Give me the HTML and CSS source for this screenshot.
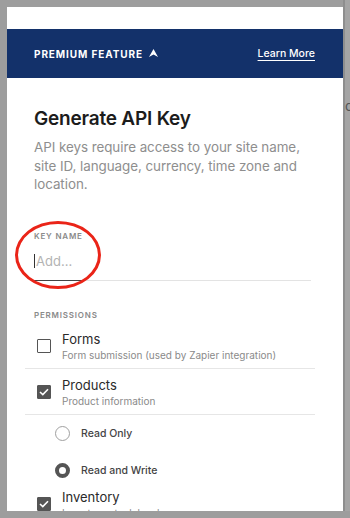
FILE: index.html
```html
<!DOCTYPE html>
<html>
<head>
<meta charset="utf-8">
<link rel="stylesheet" href="styles.css">
</head>
<body>
<div class="stage">
  <div class="modal">
    <div class="modal-top"></div>
    <div class="banner">
      <div class="banner-label">PREMIUM FEATURE
        <svg class="banner-icon" width="9" height="8" viewBox="0 0 9 8"><path d="M4.5 0 L9 8 L4.5 5.6 L0 8 Z" fill="#fff"/></svg>
      </div>
      <a class="banner-link">Learn More</a>
    </div>
    <div class="content">
      <h1 class="title">Generate API Key</h1>
      <p class="desc">API keys require access to your site name, site ID, language, currency, time zone and location.</p>

      <div class="field">
        <div class="field-label">KEY NAME</div>
        <div class="field-input"><span class="caret"></span><span class="placeholder">Add...</span></div>
        <div class="field-line"><span class="field-line-active"></span></div>
        <div class="annotation"></div>
      </div>

      <div class="section-label">PERMISSIONS</div>
      <div class="perm perm-first">
        <span class="checkbox"></span>
        <div class="perm-text">
          <div class="perm-title">Forms</div>
          <div class="perm-sub">Form submission (used by Zapier integration)</div>
        </div>
      </div>
      <div class="perm">
        <span class="checkbox checked"><svg width="10" height="8" viewBox="0 0 10 8"><path d="M1 4 L3.8 6.6 L9 1.2" fill="none" stroke="#fff" stroke-width="1.6"/></svg></span>
        <div class="perm-text">
          <div class="perm-title">Products</div>
          <div class="perm-sub">Product information</div>
        </div>
      </div>
      <div class="radios">
        <div class="radio-row"><span class="radio"></span><span class="radio-label">Read Only</span></div>
        <div class="radio-row"><span class="radio selected"></span><span class="radio-label">Read and Write</span></div>
      </div>
      <div class="perm perm-last">
        <span class="checkbox checked"><svg width="10" height="8" viewBox="0 0 10 8"><path d="M1 4 L3.8 6.6 L9 1.2" fill="none" stroke="#fff" stroke-width="1.6"/></svg></span>
        <div class="perm-text">
          <div class="perm-title">Inventory</div>
          <div class="perm-sub">Inventory stock levels</div>
        </div>
      </div>
    </div>
  </div>
  <div class="behind">
    <span class="behind-d">d</span>
  </div>
</div>
</body>
</html>
```

FILE: styles.css
```css
* { box-sizing: border-box; }
html, body { margin: 0; padding: 0; }
body {
  background: #9d9d9d;
  font-family: "Inter", "Liberation Sans", sans-serif;
  width: 350px;
  height: 518px;
  overflow: hidden;
}
.stage {
  display: flex;
  padding: 7px 0 0 7px;
  height: 518px;
}
.modal {
  width: 336px;
  height: 504px;
  background: #fff;
  overflow: hidden;
  flex: none;
}
.modal-top { height: 22px; }
.banner {
  height: 49px;
  background: #13316a;
  display: flex;
  align-items: center;
  justify-content: space-between;
  padding: 0 28px 0 27px;
  color: #fff;
}
.banner-label {
  font-size: 10px;
  font-weight: 700;
  letter-spacing: 0.9px;
  display: flex;
  align-items: center;
  gap: 6px;
}
.banner-icon { margin-top: -1px; }
.banner-link {
  font-size: 10.5px;
  font-weight: 500;
  text-decoration: underline;
  text-underline-offset: 3px;
}
.content {
  padding: 29px 27px 0 27px;
}
.title {
  margin: 0;
  font-size: 19px;
  font-weight: 600;
  color: #1c1c1c;
  line-height: 24px;
  letter-spacing: -0.2px;
}
.desc {
  margin: 7px 0 0 0;
  font-size: 13.4px;
  line-height: 18.5px;
  color: #8e8e8e;
  letter-spacing: -0.05px;
}
.field {
  position: relative;
  margin-top: 37px;
  width: 277px;
}
.field-label, .section-label {
  font-size: 8px;
  font-weight: 600;
  letter-spacing: 0.8px;
  color: #8a8a8a;
  line-height: 10px;
}
.field-input {
  display: flex;
  align-items: center;
  height: 24px;
  margin-top: 8px;
}
.caret {
  width: 1px;
  height: 14px;
  background: #333;
}
.placeholder {
  font-size: 13px;
  color: #b3b3b3;
  margin-left: 1px;
}
.field-line {
  margin-top: 7px;
  margin-left: -2px;
  height: 1px;
  background: #e3e3e3;
}
.field-line-active {
  display: block;
  width: 50px;
  height: 1px;
  background: #444;
}
.annotation {
  position: absolute;
  left: -19px;
  top: -10px;
  width: 86px;
  height: 68px;
  border: 3px solid #ea2418;
  border-radius: 50%;
}
.section-label { margin-top: 29px; }
.perm {
  display: flex;
  align-items: flex-start;
  gap: 11px;
  padding: 8px 0 5px 12px;
  border-bottom: 1px solid #e6e6e6;
  margin-left: -9px;
  width: 290px;
}
.perm-first { padding-top: 11px; }
.perm-last { border-bottom: none; padding-top: 0; }
.checkbox {
  width: 14px;
  height: 14px;
  border: 1.5px solid #555;
  border-radius: 1px;
  margin-top: 8px;
  flex: none;
  display: flex;
  align-items: center;
  justify-content: center;
}
.checkbox.checked { background: #555; }
.perm-title {
  font-size: 13px;
  color: #2a2a2a;
  line-height: 16px;
}
.perm-sub {
  font-size: 10px;
  color: #8a8a8a;
  line-height: 16px;
}
.radios {
  padding: 0 0 0 21px;
}
.radio-row {
  display: flex;
  align-items: center;
  gap: 11px;
  height: 37px;
}
.radio {
  width: 15px;
  height: 15px;
  border-radius: 50%;
  border: 1.5px solid #a0a0a0;
}
.radio.selected { border: 4.5px solid #555; }
.radio-label {
  font-size: 10.5px;
  font-weight: 500;
  color: #444;
}
.behind {
  flex: 1;
  border-left: 2px solid #8e8e8e;
  background: #a5a5a5;
  height: 511px;
  margin-top: -7px;
  overflow: hidden;
}
.behind-d {
  display: block;
  margin-top: 97px;
  font-size: 14px;
  color: #555;
}
```
